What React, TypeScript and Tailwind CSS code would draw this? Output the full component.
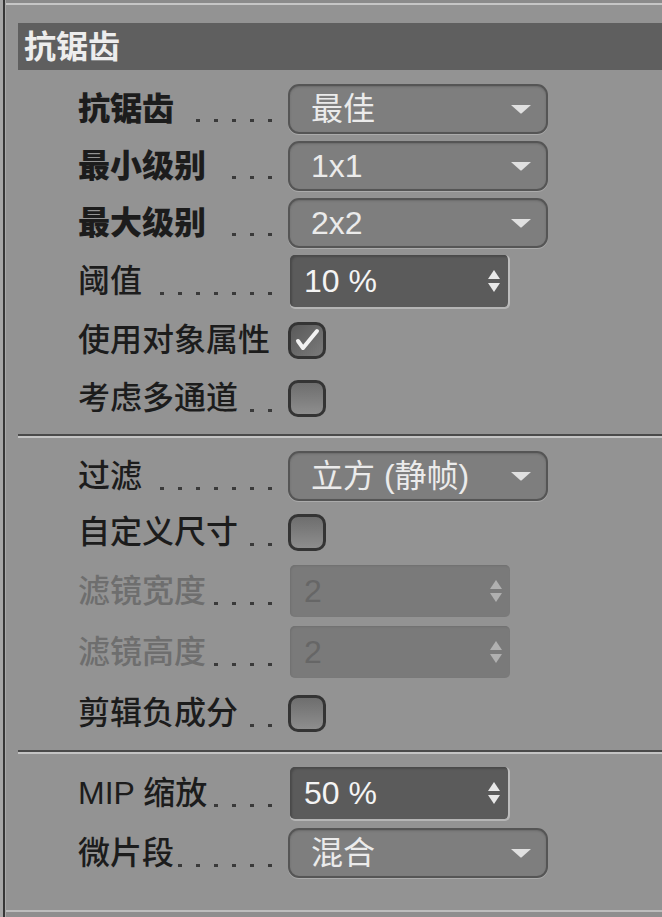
import React from "react";

const FONT = { fontFamily: '"Liberation Sans", "Noto Sans CJK SC", sans-serif' };

function Dots({ n }: { n: number }) {
  return (
    <div className="flex gap-[14px] pr-[16px] mt-[24px]">
      {Array.from({ length: n }).map((_, i) => (
        <div key={i} className="w-[4px] h-[3px] bg-[#3a3a3a]" />
      ))}
    </div>
  );
}

function Label({ text, dots, bold, disabled }: { text: string; dots: number; bold?: boolean; disabled?: boolean }) {
  return (
    <div className="w-[210px] flex items-center">
      <span
        className={
          "whitespace-nowrap text-[32px] leading-none " +
          (bold ? "font-black " : "font-medium ") +
          (disabled ? "text-[#6e6e6e]" : "text-[#1c1c1c]")
        }
      >
        {text}
      </span>
      <div className="flex-1" />
      {dots > 0 && <Dots n={dots} />}
    </div>
  );
}

function Dropdown({ value }: { value: string }) {
  return (
    <div className="w-[260px] h-[50px] rounded-[11px] border-2 border-[#555555] bg-[#7e7e7e] shadow-[0_1px_0_#ababab,inset_0_1px_2px_#6a6a6a] flex items-center pl-[21px] pr-[14px]">
      <span className="flex-1 text-[32px] leading-none text-[#ebebeb] whitespace-nowrap">{value}</span>
      <svg width="22" height="10" viewBox="0 0 22 10">
        <path d="M1 1 L21 1 L12 9 Q11 10 10 9 Z" fill="#e0e0e0" />
      </svg>
    </div>
  );
}

function NumField({ value, disabled }: { value: string; disabled?: boolean }) {
  return (
    <div
      className={
        "ml-[2px] w-[220px] h-[52px] rounded-[5px] flex items-center pl-[14px] pr-[7px] " +
        (disabled
          ? "bg-[#7a7a7a] shadow-[inset_1px_1px_2px_#707070]"
          : "bg-[#5b5b5b] shadow-[0_2px_0_#b5b5b5,inset_2px_2px_2px_#4a4a4a] border-r-2 border-[#bdbdbd]")
      }
    >
      <span className={"flex-1 text-[32px] leading-none " + (disabled ? "text-[#666666]" : "text-[#f4f4f4]")}>{value}</span>
      <svg width="14" height="24" viewBox="0 0 14 24">
        <path d="M7 1 L13 10 L1 10 Z" fill={disabled ? "#b0b0b0" : "#e8e8e8"} />
        <path d="M1 14 L13 14 L7 23 Z" fill={disabled ? "#b0b0b0" : "#e8e8e8"} />
      </svg>
    </div>
  );
}

function Checkbox({ checked }: { checked?: boolean }) {
  return (
    <div
      className={
        "w-[38px] h-[37px] rounded-[10px] border-[3px] border-[#343434] flex items-center justify-center " +
        (checked
          ? "bg-gradient-to-br from-[#5a5a5a] to-[#7a7a7a]"
          : "bg-gradient-to-b from-[#6e6e6e] to-[#8e8e8e]")
      }
    >
      {checked && (
        <svg width="26" height="24" viewBox="0 0 26 24">
          <path d="M4 13 L9 20 L23 3" stroke="#f2f2f2" strokeWidth="4" fill="none" strokeLinecap="round" strokeLinejoin="round" />
        </svg>
      )}
    </div>
  );
}

function Row({ h, children }: { h: string; children: React.ReactNode }) {
  return <div className={"flex items-center pl-[60px] " + h}>{children}</div>;
}

function Separator({ mt }: { mt: string }) {
  return (
    <div className={"flex flex-col " + mt}>
      <div className="h-[2px] bg-[#4a4a4a]" />
      <div className="h-[2px] bg-[#c4c4c4]" />
    </div>
  );
}

export default function App() {
  return (
    <div className="w-[662px] h-[917px] overflow-hidden bg-[#939393] flex" style={FONT}>
      <div className="w-[3px] bg-[#a6a6a6]" />
      <div className="w-[2px] bg-[#363636]" />
      <div className="w-[1px] bg-[#a9a9a9]" />
      <div className="flex-1 flex flex-col">
        <div className="h-[3px] bg-[#8b8b8b]" />
        <div className="h-[2px] bg-[#c6c6c6]" />
        <div className="pl-[12px] mt-[18px]">
          <div className="h-[47px] bg-[#5f5f5f] flex items-center pl-[6px]">
            <span className="text-[32px] leading-none font-bold text-[#ededed]">抗锯齿</span>
          </div>
          <div className="mt-[10px] flex flex-col">
            <Row h="h-[57px]">
              <Label text="抗锯齿" dots={5} bold />
              <Dropdown value="最佳" />
            </Row>
            <Row h="h-[57px]">
              <Label text="最小级别" dots={3} bold />
              <Dropdown value="1x1" />
            </Row>
            <Row h="h-[57px]">
              <Label text="最大级别" dots={3} bold />
              <Dropdown value="2x2" />
            </Row>
            <Row h="h-[60px]">
              <Label text="阈值" dots={7} />
              <NumField value="10 %" />
            </Row>
            <Row h="h-[58px]">
              <Label text="使用对象属性" dots={0} />
              <Checkbox checked />
            </Row>
            <Row h="h-[58px]">
              <Label text="考虑多通道" dots={2} />
              <Checkbox />
            </Row>
          </div>
          <Separator mt="mt-[7px]" />
          <div className="mt-[10px] flex flex-col">
            <Row h="h-[56px]">
              <Label text="过滤" dots={7} />
              <Dropdown value="立方 (静帧)" />
            </Row>
            <Row h="h-[56px]">
              <Label text="自定义尺寸" dots={2} />
              <Checkbox />
            </Row>
            <Row h="h-[62px]">
              <Label text="滤镜宽度" dots={4} disabled />
              <NumField value="2" disabled />
            </Row>
            <Row h="h-[60px]">
              <Label text="滤镜高度" dots={4} disabled />
              <NumField value="2" disabled />
            </Row>
            <Row h="h-[62px]">
              <Label text="剪辑负成分" dots={2} />
              <Checkbox />
            </Row>
          </div>
          <Separator mt="mt-[6px]" />
          <div className="mt-[9px] flex flex-col">
            <Row h="h-[60px]">
              <Label text="MIP 缩放" dots={4} />
              <NumField value="50 %" />
            </Row>
            <Row h="h-[60px]">
              <Label text="微片段" dots={6} />
              <Dropdown value="混合" />
            </Row>
          </div>
        </div>
        <div className="flex-1" />
        <div className="h-[2px] bg-[#bdbdbd]" />
        <div className="h-[5px] bg-[#8e8e8e]" />
      </div>
    </div>
  );
}
